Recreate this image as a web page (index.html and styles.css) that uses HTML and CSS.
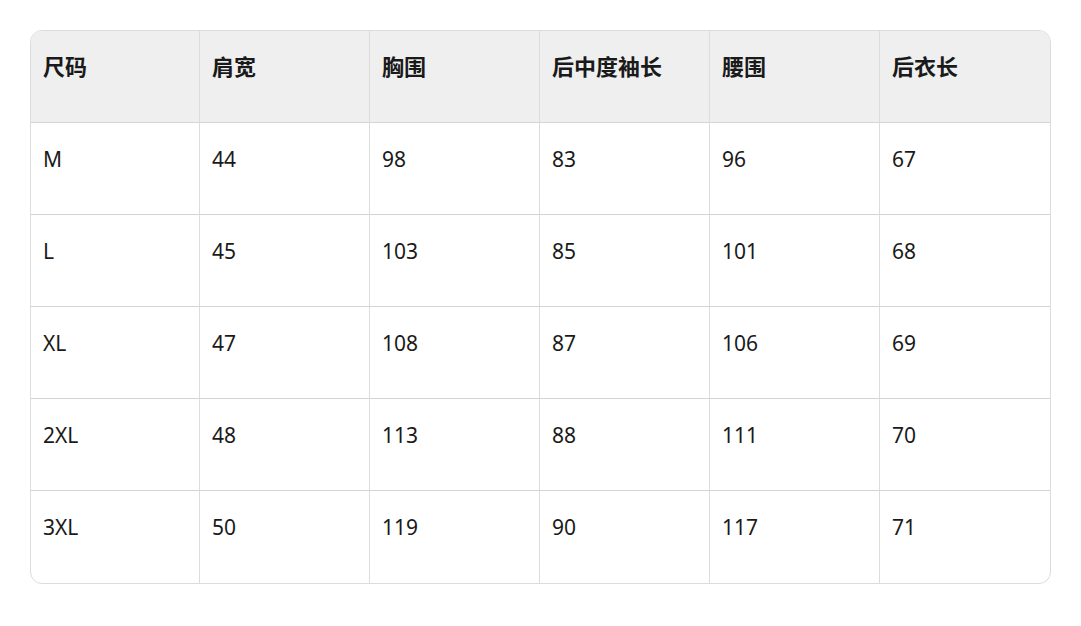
FILE: index.html
```html
<!DOCTYPE html>
<html lang="zh">
<head>
<meta charset="utf-8">
<link rel="stylesheet" href="styles.css">
</head>
<body>
<div class="wrap">
<table class="size-table">
<thead>
<tr><th>尺码</th><th>肩宽</th><th>胸围</th><th>后中度袖长</th><th>腰围</th><th>后衣长</th></tr>
</thead>
<tbody>
<tr><td>M</td><td>44</td><td>98</td><td>83</td><td>96</td><td>67</td></tr>
<tr><td>L</td><td>45</td><td>103</td><td>85</td><td>101</td><td>68</td></tr>
<tr><td>XL</td><td>47</td><td>108</td><td>87</td><td>106</td><td>69</td></tr>
<tr><td>2XL</td><td>48</td><td>113</td><td>88</td><td>111</td><td>70</td></tr>
<tr><td>3XL</td><td>50</td><td>119</td><td>90</td><td>117</td><td>71</td></tr>
</tbody>
</table>
</div>
</body>
</html>
```
FILE: styles.css
```css
html, body {
  margin: 0;
  padding: 0;
  background: #ffffff;
}
.wrap {
  padding: 30px 30px 0 30px;
}
.size-table {
  width: 1021px;
  border-collapse: separate;
  border-spacing: 0;
  border: 1px solid #dcdcdc;
  border-radius: 12px;
  overflow: hidden;
  table-layout: fixed;
  font-family: "Noto Sans", "Noto Sans CJK SC", sans-serif;
  color: #1a1a1a;
}
.size-table th,
.size-table td {
  width: 170px;
  height: 92px;
  box-sizing: border-box;
  padding: 21px 12px 0 12px;
  vertical-align: top;
  text-align: left;
  font-size: 21px;
  line-height: 30px;
  border-right: 1px solid #dcdcdc;
  border-bottom: 1px solid #d4d4d4;
}
.size-table th:first-child,
.size-table td:first-child {
  width: 169px;
}
.size-table th:last-child,
.size-table td:last-child {
  border-right: none;
}
.size-table tbody tr:last-child td {
  border-bottom: none;
}
.size-table th {
  background: #efefef;
  font-weight: 700;
  font-size: 22px;
  padding-top: 19px;
  font-family: "Noto Sans CJK SC", sans-serif;
}
```
